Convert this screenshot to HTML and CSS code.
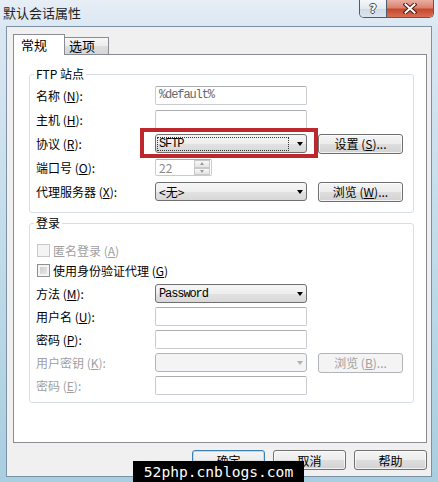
FILE: index.html
```html
<!DOCTYPE html>
<html lang="zh-CN">
<head>
    <meta charset="UTF-8">
    <meta name="viewport" content="width=device-width, initial-scale=1.0">
    <title>默认会话属性</title>
    <link rel="stylesheet" href="styles.css">
</head>
<body>
    <div class="window">
        <div class="titlebar">
            <span class="title">默认会话属性</span>
            <div class="caption-buttons">
                <span class="cap-btn cap-help">?</span>
                <span class="cap-btn cap-close">
                    <svg width="14" height="11" viewBox="0 0 14 11">
                        <path d="M2.5 1.5 L11.5 9.5 M11.5 1.5 L2.5 9.5" stroke="#4a1c14" stroke-width="4" stroke-linecap="square"/>
                        <path d="M2.5 1.5 L11.5 9.5 M11.5 1.5 L2.5 9.5" stroke="#fff" stroke-width="2" stroke-linecap="square"/>
                    </svg>
                </span>
            </div>
        </div>

        <div class="client">
            <div class="tabs">
                <span class="tab active">常规</span>
                <span class="tab">选项</span>
            </div>

            <div class="panel">
                <fieldset class="group group-ftp">
                    <legend>FTP 站点</legend>
                    <div class="row">
                        <span class="label">名称 (<u>N</u>):</span>
                        <span class="edit mono">%default%</span>
                    </div>
                    <div class="row">
                        <span class="label">主机 (<u>H</u>):</span>
                        <span class="edit"></span>
                    </div>
                    <div class="row">
                        <span class="label">协议 (<u>R</u>):</span>
                        <span class="combo focused"><span class="combo-text mono">SFTP</span><span class="arrow"></span></span>
                        <span class="btn side">设置 (<u>S</u>)...</span>
                        <span class="annotation"></span>
                    </div>
                    <div class="row">
                        <span class="label">端口号 (<u>O</u>):</span>
                        <span class="spin">
                            <span class="spin-value">22</span>
                            <span class="spin-arrows">
                                <span class="spin-up"><i></i></span>
                                <span class="spin-down"><i></i></span>
                            </span>
                        </span>
                    </div>
                    <div class="row">
                        <span class="label">代理服务器 (<u>X</u>):</span>
                        <span class="combo"><span class="combo-text">&lt;无&gt;</span><span class="arrow"></span></span>
                        <span class="btn side">浏览 (<u>W</u>)...</span>
                    </div>
                </fieldset>

                <fieldset class="group group-login">
                    <legend>登录</legend>
                    <div class="row check-row disabled">
                        <span class="check"></span>
                        <span>匿名登录 (<u>A</u>)</span>
                    </div>
                    <div class="row check-row">
                        <span class="check"></span>
                        <span>使用身份验证代理 (<u>G</u>)</span>
                    </div>
                    <div class="row">
                        <span class="label">方法 (<u>M</u>):</span>
                        <span class="combo"><span class="combo-text mono">Password</span><span class="arrow"></span></span>
                    </div>
                    <div class="row">
                        <span class="label">用户名 (<u>U</u>):</span>
                        <span class="edit"></span>
                    </div>
                    <div class="row">
                        <span class="label">密码 (<u>P</u>):</span>
                        <span class="edit"></span>
                    </div>
                    <div class="row disabled">
                        <span class="label">用户密钥 (<u>K</u>):</span>
                        <span class="combo"><span class="combo-text"></span><span class="arrow"></span></span>
                        <span class="btn side">浏览 (<u>B</u>)...</span>
                    </div>
                    <div class="row disabled">
                        <span class="label">密码 (<u>E</u>):</span>
                        <span class="edit"></span>
                    </div>
                </fieldset>
            </div>

            <div class="actions">
                <span class="btn dlg default">确定</span>
                <span class="btn dlg">取消</span>
                <span class="btn dlg">帮助</span>
            </div>
        </div>

        <div class="watermark">52php.cnblogs.com</div>
    </div>
</body>
</html>
```

FILE: styles.css
```css
* {
    box-sizing: border-box;
}
body {
    margin: 0;
    width: 438px;
    height: 482px;
    overflow: hidden;
    font-family: "Noto Sans CJK SC", sans-serif;
    font-size: 12px;
    color: #000;
    background: linear-gradient(to bottom, #e7eef6 0px, #dae7f2 28px, #c2dcea 240px, #a8cee0 482px);
}
.window {
    position: relative;
    height: 482px;
    display: flex;
    flex-direction: column;
}

/* title bar */
.titlebar {
    height: 26px;
    display: flex;
    justify-content: space-between;
    align-items: flex-start;
}
.title {
    padding: 4px 0 0 3px;
    font-size: 13px;
    line-height: 18px;
    color: #1e1e1e;
}
.caption-buttons {
    display: flex;
    margin-right: 4px;
    height: 18px;
    border: 1px solid #4d5d70;
    border-top: 0;
    border-radius: 0 0 5px 5px;
    overflow: hidden;
}
.cap-btn {
    display: flex;
    align-items: center;
    justify-content: center;
    height: 17px;
}
.cap-help {
    width: 27px;
    border-right: 1px solid #4d5d70;
    background: linear-gradient(to bottom, #f4f7fa 0%, #e2e9f0 50%, #cfd9e4 51%, #dbe5ee 100%);
    font-family: "DejaVu Sans", sans-serif;
    font-weight: bold;
    font-size: 12px;
    color: #fff;
    text-shadow: 1px 0 0 #3d4a5a, -1px 0 0 #3d4a5a, 0 1px 0 #3d4a5a, 0 -1px 0 #3d4a5a;
}
.cap-close {
    width: 46px;
    background: linear-gradient(to bottom, #eaaea2 0%, #d98270 45%, #c8472f 55%, #d66e53 100%);
}

/* client area */
.client {
    flex: 1;
    margin: 0 6px 5px;
    padding: 7px 4px 0 6px;
    border: 1px solid #7d90a4;
    background: #f0f0f0;
    display: flex;
    flex-direction: column;
}
.tabs {
    height: 20px;
    display: flex;
    align-items: flex-end;
}
.tab {
    width: 45px;
    height: 17px;
    margin-left: -1px;
    padding-left: 4px;
    border: 1px solid #898c95;
    border-bottom: 0;
    font-size: 13px;
    line-height: 16px;
    background: linear-gradient(to bottom, #f7f7f7 0%, #ececec 50%, #dedede 51%, #d6d6d6 100%);
}
.tab.active {
    position: relative;
    z-index: 1;
    width: 52px;
    height: 21px;
    margin-left: 0;
    margin-bottom: -1px;
    padding-left: 7px;
    line-height: 19px;
    background: #fff;
}
.panel {
    height: 389px;
    padding: 0 12px 0 15px;
    border: 1px solid #898c95;
    background: #fff;
}

/* group boxes */
.group {
    margin: 0;
    min-width: 0;
    padding: 5px 6px 11px;
    border: 1px solid #d5dfe5;
    border-radius: 3px;
}
.group legend {
    margin-left: -2px;
    padding: 0 2px;
    line-height: 14px;
}
.group-ftp {
    margin-top: 12px;
}
.group-login {
    margin-top: 3px;
    padding-top: 11px;
    padding-bottom: 7px;
}
.row {
    position: relative;
    display: flex;
    align-items: center;
    height: 19px;
    white-space: nowrap;
}
.row + .row {
    margin-top: 5px;
}
.group-login .row + .row {
    margin-top: 4px;
}
.group-login .check-row + .check-row {
    margin-top: 1px;
}
.label {
    width: 119px;
    flex-shrink: 0;
}
u {
    text-underline-offset: 1px;
}
.disabled {
    color: #a0a0a0;
}

/* controls */
.mono {
    font-family: "Liberation Mono", monospace;
    font-size: 12px;
    letter-spacing: -1.1px;
}
.edit {
    width: 152px;
    height: 19px;
    padding: 0 3px;
    border: 1px solid #c8ccd1;
    border-top-color: #abadb3;
    border-radius: 2px;
    background: #fff;
    line-height: 17px;
    color: #666;
}
.combo {
    width: 152px;
    height: 19px;
    display: flex;
    align-items: center;
    padding: 0 3px 0 1px;
    border: 1px solid #707070;
    border-radius: 3px;
    background: linear-gradient(to bottom, #f6f6f6 0%, #eeeeee 50%, #e2e2e2 51%, #d8d8d8 100%);
}
.combo-text {
    flex: 1;
    height: 14px;
    padding-left: 1px;
    line-height: 12px;
    border: 1px dotted transparent;
}
.combo.focused .combo-text {
    border-color: #333;
}
.arrow {
    width: 0;
    height: 0;
    margin-left: 8px;
    border-left: 3.5px solid transparent;
    border-right: 3.5px solid transparent;
    border-top: 4px solid #000;
}
.disabled .combo {
    border-color: #b1b5b9;
    background: #f4f4f4;
}
.disabled .arrow {
    border-top-color: #b0b0b0;
}
.spin {
    width: 57px;
    height: 17px;
    display: flex;
    border: 1px solid #c8ccd1;
    border-top-color: #abadb3;
    border-radius: 2px;
    background: #fff;
}
.spin-value {
    flex: 1;
    padding-left: 3px;
    line-height: 15px;
    color: #8a8a8a;
}
.spin-arrows {
    width: 17px;
    display: flex;
    flex-direction: column;
    padding: 0 1px 0 0;
}
.spin-arrows span {
    flex: 1;
    display: flex;
    align-items: center;
    justify-content: center;
    border: 1px solid #c9c9c9;
    background: linear-gradient(to bottom, #f8f8f8, #e4e4e4);
}
.spin-arrows i {
    width: 0;
    height: 0;
    border-left: 2.5px solid transparent;
    border-right: 2.5px solid transparent;
}
.spin-up i {
    border-bottom: 3px solid #9a9a9a;
}
.spin-down i {
    border-top: 3px solid #9a9a9a;
}
.check {
    width: 13px;
    height: 13px;
    margin: 0 3px 0 1px;
    border: 1px solid #8e8f8f;
    background: linear-gradient(135deg, #c6c6c6, #eeeeee);
    box-shadow: inset 0 0 0 2px #f4f4f4;
}
.disabled .check {
    border-color: #c8c8c8;
    background: #f4f4f4;
    box-shadow: none;
}
.btn {
    height: 20px;
    display: flex;
    align-items: center;
    justify-content: center;
    border: 1px solid #707070;
    border-radius: 3px;
    background: linear-gradient(to bottom, #f4f4f4 0%, #ececec 50%, #dedede 51%, #d2d2d2 100%);
    box-shadow: inset 0 0 0 1px rgba(255, 255, 255, 0.7);
}
.btn.side {
    width: 85px;
    margin-left: 11px;
}
.disabled .btn {
    border-color: #b1b5b9;
    background: #f4f4f4;
    box-shadow: none;
}
.annotation {
    position: absolute;
    left: 104px;
    top: -6px;
    width: 178px;
    height: 30px;
    border: 4px solid #c0272d;
    pointer-events: none;
}

/* dialog buttons */
.actions {
    display: flex;
    justify-content: flex-end;
    gap: 8px;
    margin-top: 7px;
}
.btn.dlg {
    width: 73px;
}
.btn.default {
    border-color: #3c7fb1;
    box-shadow: inset 0 0 0 1px #b6dcf4;
}

.watermark {
    position: absolute;
    left: 133px;
    top: 461px;
    width: 171px;
    height: 21px;
    background: #000;
    color: #fff;
    font-family: "DejaVu Sans Mono", monospace;
    font-size: 14.6px;
    line-height: 21px;
    text-align: center;
}
```
